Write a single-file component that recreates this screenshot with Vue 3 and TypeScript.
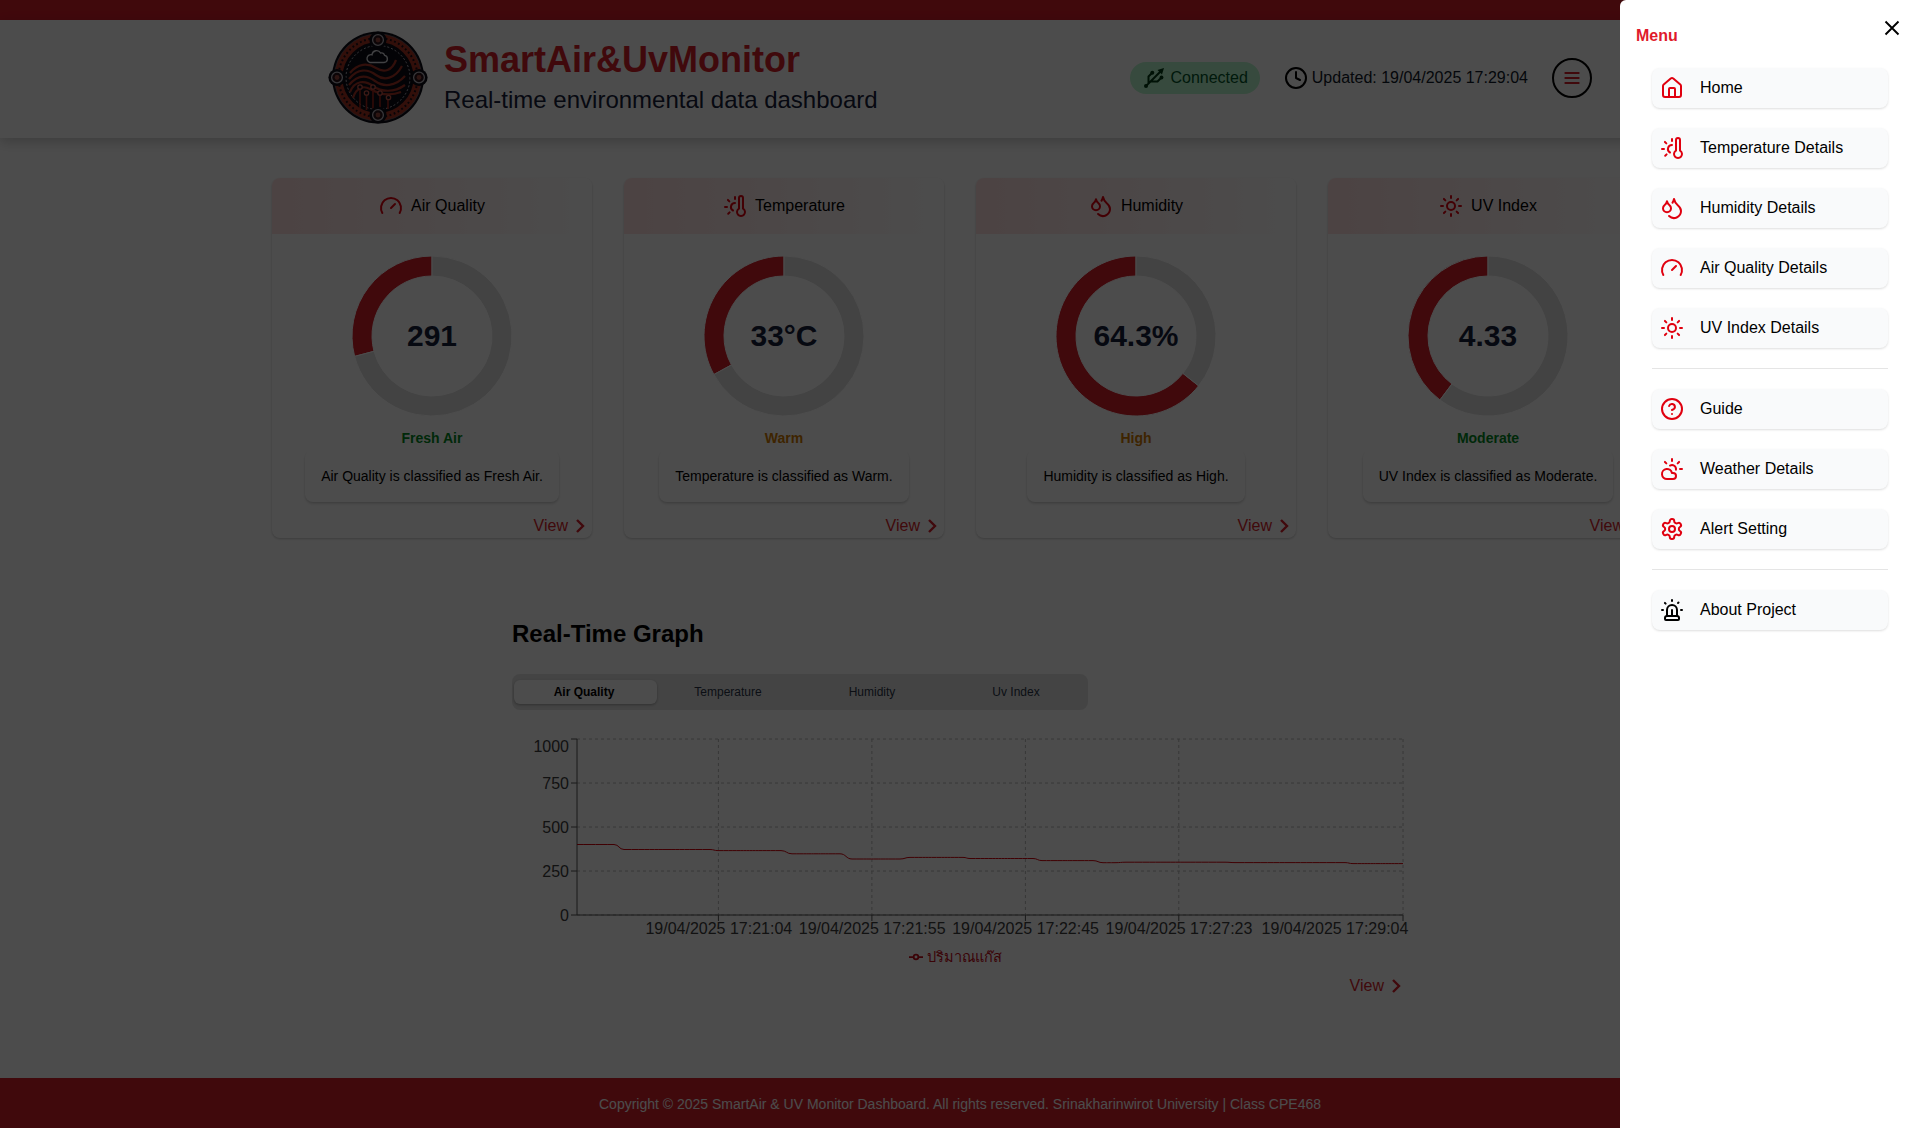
<script setup lang="ts">
interface Metric {
  title: string
  icon: string
  value: string
  ratio: number
  status: string
  tone: 'green' | 'amber'
  note: string
}

interface MenuItem {
  label: string
  icon: string
}

const icons: Record<string, string[]> = {
  gauge: ['m12 14 4-4', 'M3.34 19a10 10 0 1 1 17.32 0'],
  thermo: [
    'M12 9a4 4 0 0 0-2 7.5', 'M12 3v2', 'm6.6 18.4-1.4 1.4',
    'M20 4v10.54a4 4 0 1 1-4 0V4a2 2 0 0 1 4 0Z', 'M4 13H2', 'M6.34 7.34 4.93 5.93',
  ],
  drops: [
    'M7 16.3c2.2 0 4-1.83 4-4.05 0-1.16-.57-2.26-1.71-3.19S7.29 6.75 7 5.3c-.29 1.45-1.14 2.84-2.29 3.76S3 11.1 3 12.25c0 2.22 1.8 4.05 4 4.05z',
    'M12.56 6.6A10.97 10.97 0 0 0 14 3.02c.5 2.5 2 4.9 4 6.5s3 3.5 3 5.5a6.98 6.98 0 0 1-11.91 4.97',
  ],
  sun: [
    'M8 12a4 4 0 1 0 8 0a4 4 0 1 0-8 0', 'M12 2v2', 'M12 20v2', 'm4.93 4.93 1.41 1.41',
    'm17.66 17.66 1.41 1.41', 'M2 12h2', 'M20 12h2', 'm6.34 17.66-1.41 1.41', 'm19.07 4.93-1.41 1.41',
  ],
  home: [
    'M15 21v-8a1 1 0 0 0-1-1h-4a1 1 0 0 0-1 1v8',
    'M3 10a2 2 0 0 1 .709-1.528l7-5.999a2 2 0 0 1 2.582 0l7 5.999A2 2 0 0 1 21 10v9a2 2 0 0 1-2 2H5a2 2 0 0 1-2-2z',
  ],
  help: ['M2 12a10 10 0 1 0 20 0a10 10 0 1 0-20 0', 'M9.09 9a3 3 0 0 1 5.83 1c0 2-3 3-3 3', 'M12 17h.01'],
  cloudSun: [
    'M12 2v2', 'm4.93 4.93 1.41 1.41', 'M20 12h2', 'm19.07 4.93-1.41 1.41',
    'M15.947 12.65a4 4 0 0 0-5.925-4.128', 'M13 22H7a5 5 0 1 1 4.9-6H13a3 3 0 0 1 0 6Z',
  ],
  gear: [
    'M12.22 2h-.44a2 2 0 0 0-2 2v.18a2 2 0 0 1-1 1.73l-.43.25a2 2 0 0 1-2 0l-.15-.08a2 2 0 0 0-2.73.73l-.22.38a2 2 0 0 0 .73 2.73l.15.1a2 2 0 0 1 1 1.72v.51a2 2 0 0 1-1 1.74l-.15.09a2 2 0 0 0-.73 2.73l.22.38a2 2 0 0 0 2.73.73l.15-.08a2 2 0 0 1 2 0l.43.25a2 2 0 0 1 1 1.73V20a2 2 0 0 0 2 2h.44a2 2 0 0 0 2-2v-.18a2 2 0 0 1 1-1.73l.43-.25a2 2 0 0 1 2 0l.15.08a2 2 0 0 0 2.73-.73l.22-.39a2 2 0 0 0-.73-2.73l-.15-.08a2 2 0 0 1-1-1.74v-.5a2 2 0 0 1 1-1.74l.15-.09a2 2 0 0 0 .73-2.73l-.22-.38a2 2 0 0 0-2.73-.73l-.15.08a2 2 0 0 1-2 0l-.43-.25a2 2 0 0 1-1-1.73V4a2 2 0 0 0-2-2z',
    'M9 12a3 3 0 1 0 6 0a3 3 0 1 0-6 0',
  ],
  siren: [
    'M7 18v-6a5 5 0 1 1 10 0v6', 'M5 21a1 1 0 0 0 1 1h12a1 1 0 0 0 1-1v-1a2 2 0 0 0-2-2H7a2 2 0 0 0-2 2z',
    'M21 12h1', 'M18.5 4.5 18 5', 'M2 12h1', 'M12 2v1', 'm4.929 4.929.707.707', 'M12 12v6',
  ],
}

const metrics: Metric[] = [
  { title: 'Air Quality', icon: 'gauge', value: '291', ratio: 0.291, status: 'Fresh Air', tone: 'green', note: 'Air Quality is classified as Fresh Air.' },
  { title: 'Temperature', icon: 'thermo', value: '33°C', ratio: 0.33, status: 'Warm', tone: 'amber', note: 'Temperature is classified as Warm.' },
  { title: 'Humidity', icon: 'drops', value: '64.3%', ratio: 0.643, status: 'High', tone: 'amber', note: 'Humidity is classified as High.' },
  { title: 'UV Index', icon: 'sun', value: '4.33', ratio: 0.3975, status: 'Moderate', tone: 'green', note: 'UV Index is classified as Moderate.' },
]

const menuGroups: MenuItem[][] = [
  [
    { label: 'Home', icon: 'home' },
    { label: 'Temperature Details', icon: 'thermo' },
    { label: 'Humidity Details', icon: 'drops' },
    { label: 'Air Quality Details', icon: 'gauge' },
    { label: 'UV Index Details', icon: 'sun' },
  ],
  [
    { label: 'Guide', icon: 'help' },
    { label: 'Weather Details', icon: 'cloudSun' },
    { label: 'Alert Setting', icon: 'gear' },
  ],
  [{ label: 'About Project', icon: 'siren' }],
]

const tabs = ['Air Quality', 'Temperature', 'Humidity', 'Uv Index']

// Ring segment between two fractions of a turn, measured counter-clockwise from 12 o'clock.
function segment(from: number, to: number): string {
  const at = (f: number, r: number) =>
    `${(80 - r * Math.sin(f * 2 * Math.PI)).toFixed(2)} ${(80 - r * Math.cos(f * 2 * Math.PI)).toFixed(2)}`
  const large = to - from > 0.5 ? 1 : 0
  return `M${at(from, 80)}A80 80 0 ${large} 0 ${at(to, 80)}L${at(to, 60)}A60 60 0 ${large} 1 ${at(from, 60)}Z`
}

const yTicks = [
  { label: '1000', y: 5, dy: 13.3 },
  { label: '750', y: 49, dy: 5.7 },
  { label: '500', y: 93, dy: 5.7 },
  { label: '250', y: 137, dy: 5.7 },
  { label: '0', y: 181, dy: 5.7 },
]

const xTicks = [
  { label: '19/04/2025 17:21:04', x: 206.4, tx: 206.8 },
  { label: '19/04/2025 17:21:55', x: 359.9, tx: 360.2 },
  { label: '19/04/2025 17:22:45', x: 513.4, tx: 513.6 },
  { label: '19/04/2025 17:27:23', x: 666.8, tx: 667 },
  { label: '19/04/2025 17:29:04', x: 891, tx: 823 },
]

const readings: [number, number][] = [
  [65, 110.5], [102, 110.5], [112, 115.5], [198, 115.5], [206, 116.6], [269, 116.6], [280, 119.8],
  [328, 119.8], [340, 125], [388, 125], [398, 123.4], [451, 123.4], [458, 124.5], [521, 124.5],
  [530, 126.6], [581, 126.6], [591, 128.7], [603, 128.7], [614, 128.2], [713, 128.2], [723, 128.6],
  [833, 128.6], [841, 129.6], [891, 129.6],
]
const linePath = readings
  .map(([x, y], i) => {
    if (i === 0) return `M${x} ${y}`
    const mid = (readings[i - 1][0] + x) / 2
    return `C${mid} ${readings[i - 1][1]} ${mid} ${y} ${x} ${y}`
  })
  .join('')
</script>

<template>
  <div class="page">
    <div class="topbar"></div>
    <header class="header">
      <div class="header-inner">
        <div class="brand">
          <svg class="logo" viewBox="0 0 100 100">
            <ellipse cx="50" cy="49.5" rx="46" ry="46" fill="#0b0a14" />
            <circle cx="50" cy="49.5" r="39.5" fill="none" stroke="#a83222" stroke-width="8" />
            <circle cx="50" cy="49.5" r="39.5" fill="none" stroke="#1a0f18" stroke-width="2" stroke-dasharray="1.8 2.6" />
            <circle cx="50" cy="49.5" r="43.6" fill="none" stroke="#6d6772" stroke-width=".7" />
            <circle cx="50" cy="49.5" r="34" fill="#0b0a14" />
            <circle cx="50" cy="49.5" r="32" fill="none" stroke="#b9b6bf" stroke-width="1" stroke-dasharray="2 2" />
            <path d="M42 34.5h14a3.6 3.6 0 0 0 .6-7.1 3.4 3.4 0 0 0-4-2.4 4.6 4.6 0 0 0-8.6 1.8 3.9 3.9 0 0 0-2 7.7Z" fill="none" stroke="#d9d9df" stroke-width="1.4" />
            <g fill="none" stroke="#a83525" stroke-width="2.2">
              <path d="M22 45c8-10 18-10 26-5s16 3 20-8" />
              <path d="M21 51c9-11 19-10 27-4s19 4 26-9" />
              <path d="M21 57c9-11 18-10 26-4s20 6 30-5" />
              <path d="M22 64c5-12 15-12 23-6s21 7 32-1" />
              <path d="M25 70c3-10 10-13 17-9s18 8 31 3" />
            </g>
            <g stroke="#a3261c" stroke-width="1.6">
              <path d="M32 60v20M38.5 66v16M45 60v23M52 66v16M60 71v10" />
            </g>
            <g fill="#0b0a14" stroke="#c7574a" stroke-width="1.3">
              <circle cx="32" cy="59" r="2.2" /><circle cx="38.5" cy="65" r="2.2" />
              <circle cx="45" cy="59" r="2.2" /><circle cx="52" cy="65" r="2.2" /><circle cx="60.5" cy="69.5" r="2.2" />
            </g>
            <g v-for="p in [[50, 12], [50, 87], [9, 49.5], [91, 49.5]]" :key="p.join()">
              <circle :cx="p[0]" :cy="p[1]" r="8.6" fill="#0b0a14" />
              <circle :cx="p[0]" :cy="p[1]" r="5.4" fill="#2a1218" stroke="#b9b6bf" stroke-width="1.3" />
              <circle :cx="p[0]" :cy="p[1]" r="2.4" fill="#98463f" />
            </g>
          </svg>
          <div class="brand-text">
            <h1>SmartAir&amp;UvMonitor</h1>
            <p>Real-time environmental data dashboard</p>
          </div>
        </div>
        <div class="status">
          <div class="badge">
            <svg class="icon" viewBox="0 0 24 24">
              <path d="M4 20 19 5M10 7l-3.500 3.500V17.500M9.500 15.500h6L19.500 11.500" />
              <g fill="currentColor" stroke="none">
                <path d="M15.500 4 22 2 20 8.500Z" />
                <circle cx="4" cy="20" r="2" /><circle cx="10.300" cy="6.700" r="2" /><circle cx="19.500" cy="11.500" r="1.900" />
              </g>
            </svg>
            <span>Connected</span>
          </div>
          <div class="updated">
            <svg class="icon" viewBox="0 0 24 24"><circle cx="12" cy="12" r="10" /><path d="M12 6v6l4 2" /></svg>
            <span>Updated: 19/04/2025 17:29:04</span>
          </div>
          <button class="burger">
            <svg class="icon small" viewBox="0 0 24 24"><path d="M4 6h16M4 12h16M4 18h16" /></svg>
          </button>
        </div>
      </div>
    </header>

    <main>
      <section class="cards">
        <article v-for="m in metrics" :key="m.title" class="card">
          <div class="card-head">
            <svg class="icon red" viewBox="0 0 24 24"><path v-for="d in icons[m.icon]" :key="d" :d="d" /></svg>
            <span>{{ m.title }}</span>
          </div>
          <svg class="ring" viewBox="0 0 160 160">
            <path :d="segment(0, m.ratio)" class="ring-value" />
            <path :d="segment(m.ratio, 1)" class="ring-rest" />
            <text x="80" y="90" text-anchor="middle">{{ m.value }}</text>
          </svg>
          <p class="label" :class="m.tone">{{ m.status }}</p>
          <p class="note">{{ m.note }}</p>
          <a class="view">View<svg class="icon chevron" viewBox="0 0 24 24"><path d="m9 6 6 6-6 6" /></svg></a>
        </article>
      </section>

      <section class="graph">
        <h2>Real-Time Graph</h2>
        <div class="tabs">
          <div v-for="(t, i) in tabs" :key="t" class="tab"><span :class="{ active: i === 0 }">{{ t }}</span></div>
        </div>
        <svg class="chart" viewBox="0 0 896 206">
          <g class="grid">
            <line v-for="t in yTicks" :key="t.label" x1="65" x2="891" :y1="t.y" :y2="t.y" />
            <line v-for="t in xTicks" :key="t.label" :x1="t.x" :x2="t.x" y1="5" y2="181" />
          </g>
          <g class="axis">
            <line x1="65" x2="65" y1="5" y2="181" />
            <line x1="65" x2="891" y1="181" y2="181" />
            <line v-for="t in yTicks" :key="t.label" x1="59" x2="65" :y1="t.y" :y2="t.y" />
            <line v-for="t in xTicks" :key="t.label" :x1="t.x" :x2="t.x" y1="181" y2="187" />
          </g>
          <text v-for="t in yTicks" :key="t.label" x="57" :y="t.y + t.dy" text-anchor="end">{{ t.label }}</text>
          <text v-for="t in xTicks" :key="t.label" :x="t.tx" y="200" text-anchor="middle">{{ t.label }}</text>
          <path class="series" :d="linePath" />
        </svg>
        <div class="legend">
          <svg width="14" height="14" viewBox="0 0 32 32">
            <path d="M0 16h10.667A5.333 5.333 0 1 1 21.333 16H32M21.333 16A5.333 5.333 0 1 1 10.667 16" />
          </svg>
          <span>ปริมาณแก๊ส</span>
        </div>
        <a class="view">View<svg class="icon chevron" viewBox="0 0 24 24"><path d="m9 6 6 6-6 6" /></svg></a>
      </section>
    </main>

    <footer>Copyright © 2025 SmartAir &amp; UV Monitor Dashboard. All rights reserved. Srinakharinwirot University | Class CPE468</footer>

    <div class="overlay"></div>
    <aside class="drawer">
      <div class="drawer-head">
        <strong>Menu</strong>
        <svg class="icon close" viewBox="0 0 24 24"><path d="M5.500 5.500 18.500 18.500M18.500 5.500 5.500 18.500" /></svg>
      </div>
      <nav>
        <template v-for="(group, g) in menuGroups" :key="g">
          <hr v-if="g > 0" />
          <a v-for="item in group" :key="item.label" class="item">
            <svg class="icon" :class="{ red: g < 2 }" viewBox="0 0 24 24">
              <path v-for="d in icons[item.icon]" :key="d" :d="d" />
            </svg>
            <span>{{ item.label }}</span>
          </a>
        </template>
      </nav>
    </aside>
  </div>
</template>

<style>
html,
body {
  overflow: hidden;
}
</style>

<style scoped>
.page {
  position: relative;
  display: flex;
  flex-direction: column;
  width: 1920px;
  height: 1128px;
  overflow: hidden;
  background: #fff;
  color: #000;
  font: 16px/24px 'Liberation Sans', Arial, sans-serif;
}
h1, h2, p { margin: 0; }
.icon {
  flex: none;
  width: 24px;
  height: 24px;
  fill: none;
  stroke: currentColor;
  stroke-width: 2;
  stroke-linecap: round;
  stroke-linejoin: round;
}
.icon.small { width: 20px; height: 20px; stroke-width: 2.4; }
.icon.red { color: #e0000f; }
.topbar { flex: none; height: 20px; background: #d71e2b; }
.header {
  flex: none;
  display: flex;
  justify-content: center;
  height: 118px;
  box-sizing: border-box;
  padding-top: 8px;
  box-shadow: 0 4px 12px rgba(0, 0, 0, 0.2);
}
.header-inner {
  display: flex;
  align-items: center;
  justify-content: space-between;
  width: 1264px;
  height: 100px;
}
.brand { display: flex; align-items: center; gap: 16px; }
.logo { width: 100px; height: 100px; }
.brand-text { display: flex; flex-direction: column; gap: 4px; padding-bottom: 1px; }
h1 { font-size: 36px; line-height: 40px; font-weight: 700; color: #d71e2b; }
.brand-text p { font-size: 24px; line-height: 32px; color: #17213a; }
.status { display: flex; align-items: center; gap: 24px; }
.badge {
  display: flex;
  align-items: center;
  gap: 4px;
  height: 32px;
  padding: 0 12px;
  border-radius: 16px;
  background: #b9f8cf;
  color: #01562a;
}
.badge .icon { color: #003a14; }
.updated { display: flex; align-items: center; gap: 4px; color: #101828; }
.updated .icon { color: #000; }
.burger {
  display: flex;
  align-items: center;
  justify-content: center;
  box-sizing: border-box;
  width: 40px;
  height: 40px;
  padding: 0;
  border: 2px solid #000;
  border-radius: 50%;
  background: none;
  color: #d71e2b;
}
main { display: flex; flex-direction: column; align-items: center; height: 940px; flex: none; }
.cards { display: flex; gap: 32px; margin-top: 40px; }
.card {
  display: flex;
  flex-direction: column;
  align-items: center;
  width: 320px;
  height: 360px;
  border-radius: 8px;
  overflow: hidden;
  box-shadow: 0 1px 3px rgba(0, 0, 0, 0.12), 0 1px 2px rgba(0, 0, 0, 0.1);
}
.card-head {
  align-self: stretch;
  display: flex;
  align-items: center;
  justify-content: center;
  gap: 8px;
  height: 56px;
  background: linear-gradient(to right, #ffe0e0, #fff);
}
.ring { flex: none; width: 160px; height: 160px; margin-top: 22px; overflow: visible; }
.ring path { stroke: #fff; stroke-width: 1; }
.ring-value { fill: #d71e2b; }
.ring-rest { fill: #e0e0e0; }
.ring text { font-size: 30px; font-weight: 700; fill: #17213a; }
.label { margin-top: 12px; font-size: 14px; line-height: 20px; font-weight: 700; }
.green { color: #008a1e; }
.amber { color: #d07a00; }
.note {
  margin-top: 2px;
  padding: 16px;
  border-radius: 8px;
  font-size: 14px;
  line-height: 20px;
  box-shadow: 0 2px 3px rgba(0, 0, 0, 0.12), 0 1px 2px rgba(0, 0, 0, 0.08);
}
.view { display: flex; align-self: flex-end; color: #d71e2b; }
.card .view { margin-top: 12px; }
.chevron { stroke-linecap: butt; stroke-linejoin: miter; stroke-width: 2.4; }
.graph { display: flex; flex-direction: column; width: 896px; margin-top: 80px; }
h2 { font-size: 24px; line-height: 32px; font-weight: 700; }
.tabs {
  display: flex;
  width: 576px;
  height: 36px;
  margin-top: 24px;
  border-radius: 8px;
  background: #e5e5e5;
}
.tab {
  display: flex;
  align-items: center;
  justify-content: center;
  width: 144px;
  font-size: 12px;
  line-height: 24px;
  color: #2a3548;
}
.tab .active {
  flex: none;
  box-sizing: border-box;
  width: 143px;
  margin-left: 3px;
  padding-right: 3px;
  border-radius: 6px;
  background: #fff;
  color: #000;
  font-weight: 700;
  text-align: center;
  box-shadow: 0 1px 3px rgba(0, 0, 0, 0.3);
}
.chart { width: 896px; height: 206px; margin-top: 24px; overflow: visible; }
.chart text { fill: #3c3c3c; }
.grid { stroke: #b8b8b8; stroke-dasharray: 3 3; }
.axis { stroke: #555; }
.series { fill: none; stroke: #d7000b; }
.legend {
  display: flex;
  align-items: center;
  justify-content: center;
  gap: 4px;
  height: 24px;
  margin-top: 5px;
  padding-right: 10px;
  color: #c40a18;
}
.legend span { font-size: 14.5px; }
.legend svg { fill: none; stroke: currentColor; stroke-width: 4; }
.graph .view { margin-top: 5px; }
footer {
  flex: none;
  height: 50px;
  box-sizing: border-box;
  padding-top: 16px;
  background: #d71e2b;
  color: #fff;
  font-size: 14px;
  line-height: 20px;
  text-align: center;
}
.overlay { position: absolute; inset: 0; background: rgba(0, 0, 0, 0.7); }
.drawer {
  position: absolute;
  top: 0;
  right: 0;
  bottom: 0;
  width: 300px;
  box-sizing: border-box;
  padding: 16px;
  border-radius: 6px 0 0 0;
  background: #fff;
}
.drawer-head { display: flex; justify-content: space-between; height: 52px; }
.drawer-head strong { margin-top: 8px; color: #e01a2b; }
.close { stroke-linecap: butt; stroke-width: 1.9; }
nav { display: flex; flex-direction: column; gap: 20px; padding: 0 16px; }
hr { width: 100%; height: 1px; margin: 0; border: 0; background: #e5e5e5; }
.item {
  display: flex;
  align-items: center;
  gap: 16px;
  height: 40px;
  padding: 0 8px;
  border-radius: 8px;
  background: #f9fafb;
  box-shadow: 0 1px 3px rgba(0, 0, 0, 0.08), 0 1px 2px rgba(0, 0, 0, 0.06);
}
</style>
